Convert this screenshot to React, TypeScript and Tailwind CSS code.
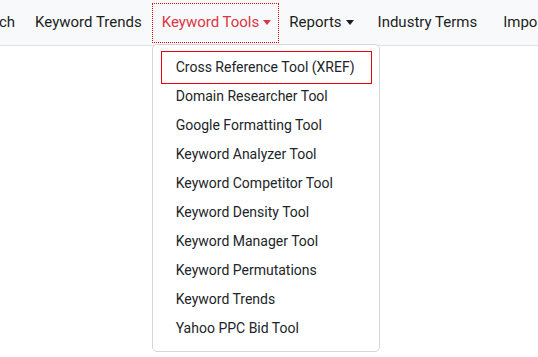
const navItems = [
  { label: 'Search', extra: '' },
  { label: 'Keyword Trends', extra: '' },
  { label: 'Keyword Tools', extra: '', dropdown: true, active: true },
  { label: 'Reports', extra: '', dropdown: true },
  { label: 'Industry Terms', extra: 'ml-[6px]' },
  { label: 'Import', extra: 'ml-[6px]' },
]

const tools = [
  'Cross Reference Tool (XREF)',
  'Domain Researcher Tool',
  'Google Formatting Tool',
  'Keyword Analyzer Tool',
  'Keyword Competitor Tool',
  'Keyword Density Tool',
  'Keyword Manager Tool',
  'Keyword Permutations',
  'Keyword Trends',
  'Yahoo PPC Bid Tool',
]

function Caret() {
  return (
    <span className="ml-[4px] inline-block h-0 w-0 border-x-[4.5px] border-t-[5px] border-x-transparent border-t-current align-middle" />
  )
}

export default function App() {
  return (
    <div className="h-[357px] w-[538px] overflow-hidden bg-white font-['Roboto',sans-serif]">
      <nav className="h-[46px] border-b border-[#dee2e6] bg-[#f8f9fa]">
        <ul className="-ml-[41px] flex h-full items-center whitespace-nowrap">
          {navItems.map((item) => (
            <li key={item.label} className={`relative flex h-full items-center ${item.extra}`}>
              <div
                className={
                  item.active
                    ? 'flex h-[40px] cursor-pointer items-center border border-dotted border-[#e00000] pl-[9px] pr-[7px] text-[15px] text-[#dc3545]'
                    : item.dropdown
                      ? 'flex h-[40px] cursor-pointer items-center pl-[10px] pr-[8px] text-[15px] text-[#1b1e21]'
                      : 'flex h-[40px] cursor-pointer items-center px-[10px] text-[15px] text-[#1b1e21]'
                }
              >
                {item.label}
                {item.dropdown && <Caret />}
              </div>
              {item.active && (
                <div className="absolute left-0 top-[44px] z-10 w-[228px] rounded-[5px] border border-[#d6d6d6] bg-white py-[8px]">
                  {tools.map((t, i) =>
                    i === 0 ? (
                      // selected item: red frame drawn as a 1px red backing behind a white inner box
                      <div key={t} className="-my-[2px] ml-[8px] mr-[7px] bg-[#e8000b] p-[1px]">
                        <div className="flex h-[31px] cursor-pointer items-center bg-white px-[14px] text-[14px] text-[#212529]">
                          {t}
                        </div>
                      </div>
                    ) : (
                      <div
                        key={t}
                        className="ml-[10px] mr-[9px] flex h-[29px] cursor-pointer items-center px-[13px] text-[14px] text-[#212529]"
                      >
                        {t}
                      </div>
                    )
                  )}
                </div>
              )}
            </li>
          ))}
        </ul>
      </nav>
    </div>
  )
}
